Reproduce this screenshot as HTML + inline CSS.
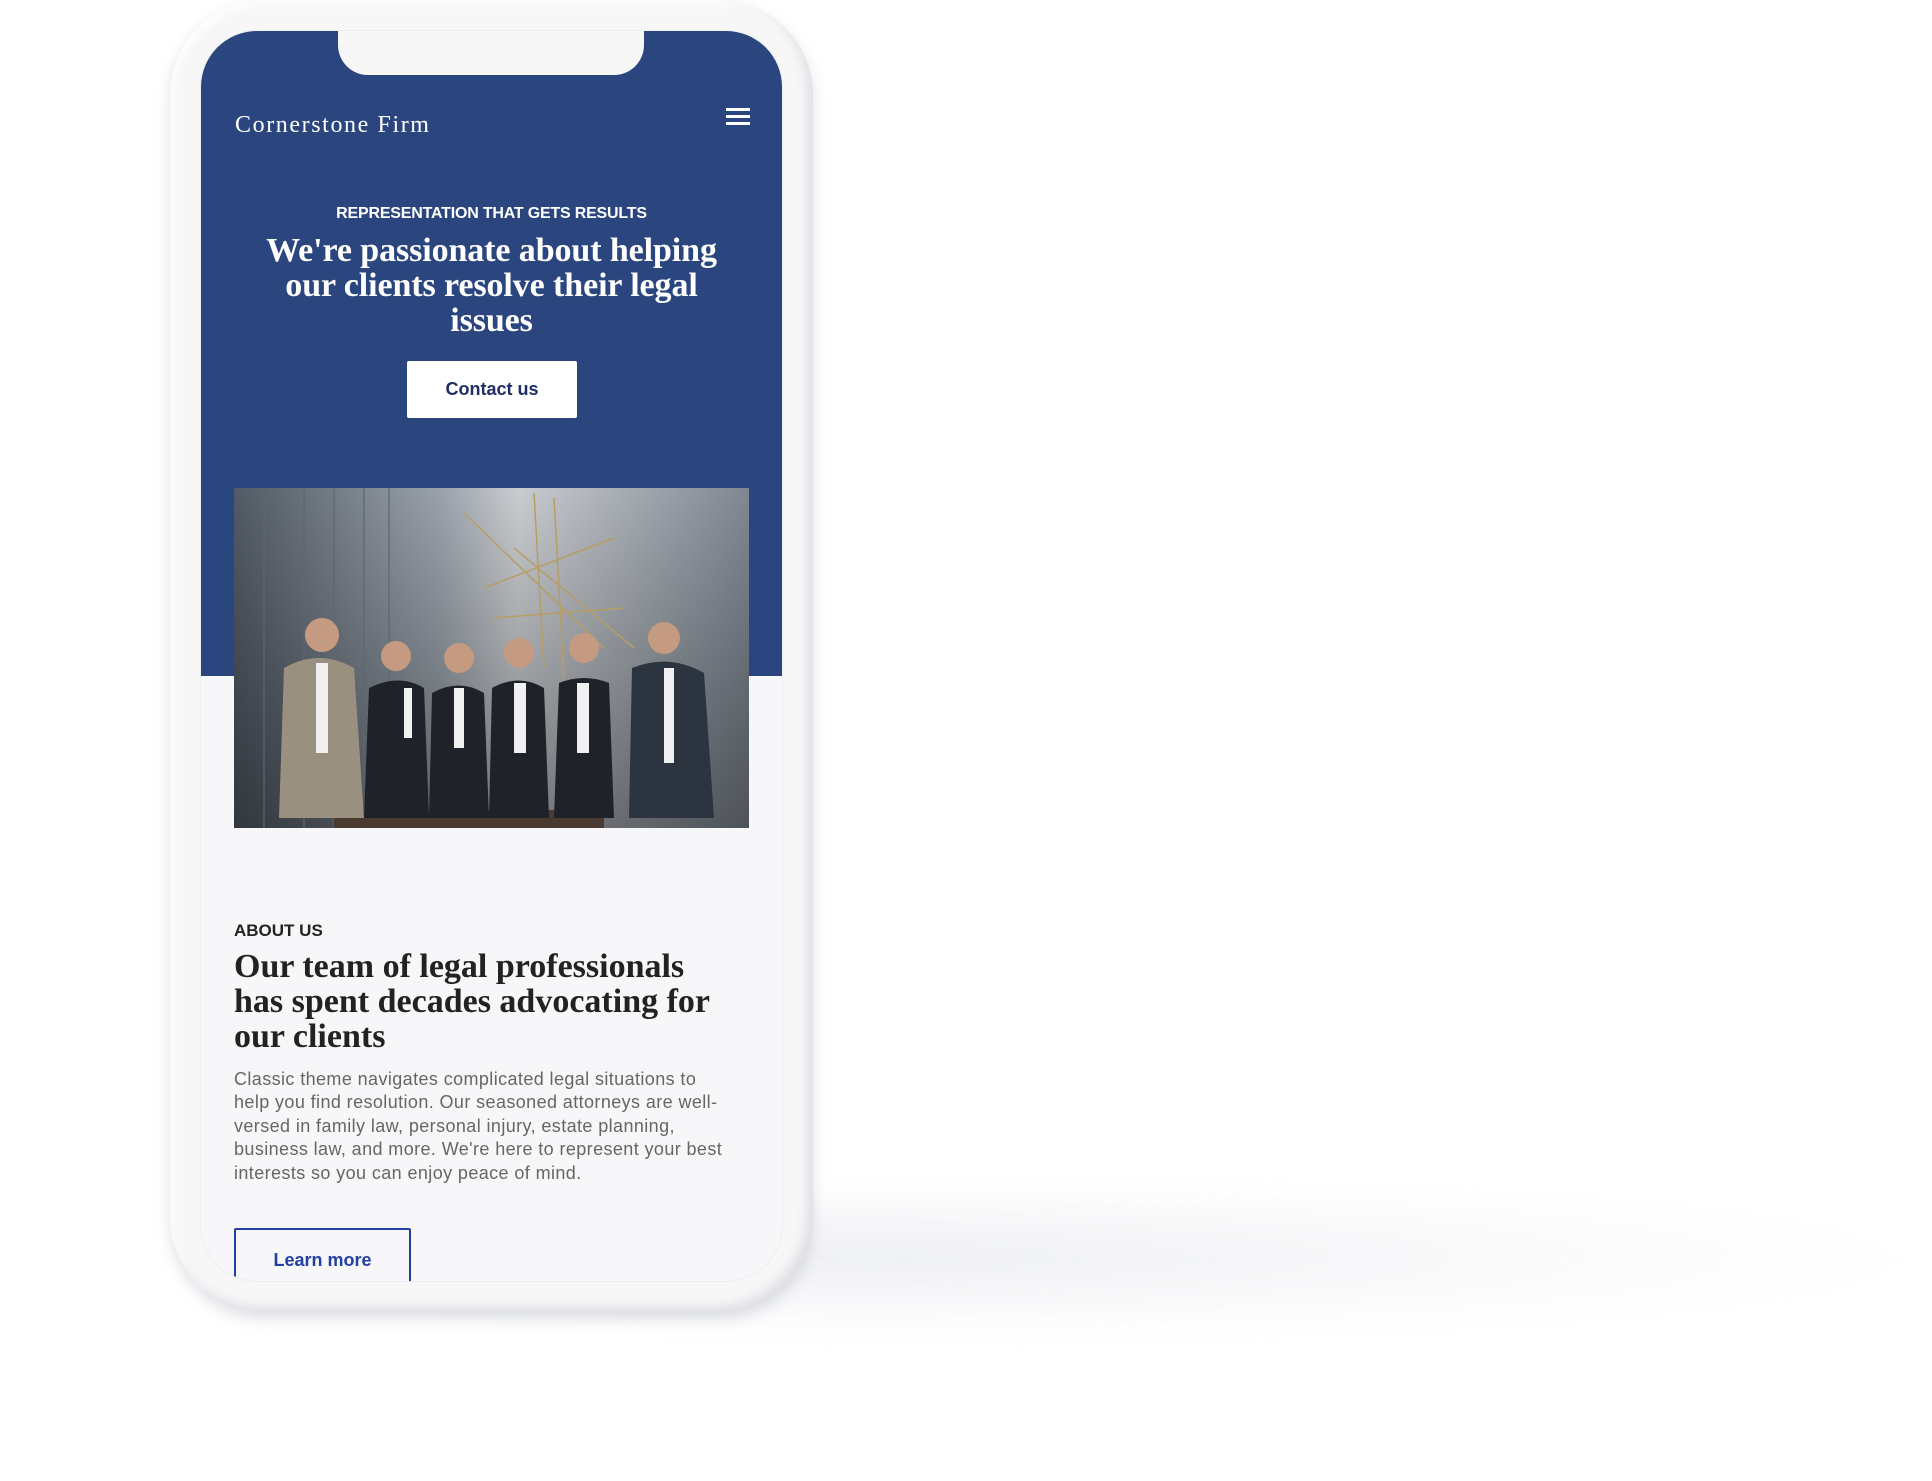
<!DOCTYPE html>
<html><head><meta charset="utf-8"><style>
html,body{margin:0;padding:0}
body{width:1932px;height:1481px;background:#fff;position:relative;overflow:hidden;font-family:"Liberation Sans",sans-serif}
.shadow{position:absolute;left:300px;top:1190px;width:1620px;height:150px;border-radius:50%;background:radial-gradient(ellipse at 35% 45%,rgba(190,195,208,.25),rgba(225,227,234,.1) 55%,rgba(255,255,255,0) 72%);filter:blur(10px)}
.phone{position:absolute;left:170px;top:0;width:643px;height:1313px;border-radius:95px;background:#f7f7f8;box-shadow:0 6px 14px rgba(150,155,170,.3),inset -6px -6px 10px rgba(200,202,210,.5),inset 4px 4px 8px rgba(255,255,255,.9)}
.screen{position:absolute;left:201px;top:31px;width:581px;height:1250px;border-radius:56px;background:#f7f7f9;overflow:hidden;box-shadow:0 0 0 1px #eceef2}
.blue{position:absolute;left:0;top:0;width:581px;height:645px;background:#2b467f}
.notch{position:absolute;left:137px;top:0;width:306px;height:44px;background:#f7f7f8;border-radius:0 0 30px 30px}
.serif{font-family:"Liberation Serif",serif}
.logo{position:absolute;left:34px;top:81px;color:#fff;font-size:24px;letter-spacing:1.6px}
.ham{position:absolute;left:525px;top:77px;width:24px}
.ham i{display:block;height:3px;background:#fff;margin-bottom:4px}
.eyebrow{position:absolute;left:0;width:581px;top:174px;text-align:center;color:#fff;font-size:16px;font-weight:bold;letter-spacing:-.2px}
.h1{position:absolute;left:0;width:581px;top:202px;text-align:center;color:#fff;font-size:34px;line-height:35px;font-weight:bold;letter-spacing:-.1px}
.btn{position:absolute;left:206px;top:330px;width:170px;height:57px;background:#fff;border-radius:2px;color:#1f2f66;font-size:18px;font-weight:bold;text-align:center;line-height:57px}
.photo{position:absolute;left:33px;top:457px;width:515px;height:340px}
.about{position:absolute;left:33px;top:890px;font-size:17px;color:#222;font-weight:bold}
.h2{position:absolute;left:33px;top:918px;width:560px;font-size:34px;line-height:35px;color:#222;font-weight:bold;letter-spacing:0;white-space:nowrap}
.p{position:absolute;left:33px;top:1037px;width:560px;font-size:18px;line-height:23.4px;color:#666;letter-spacing:.4px;white-space:nowrap}
.btn2{position:absolute;left:33px;top:1197px;width:177px;height:70px;border:2px solid #2240a0;border-radius:2px;color:#2240a0;font-size:18px;font-weight:bold;text-align:center;line-height:60px;box-sizing:border-box}
</style></head><body>
<div class="shadow"></div>
<div class="phone"></div>
<div class="screen">
<div class="blue"></div>
<div class="notch"></div>
<div class="logo serif">Cornerstone Firm</div>
<div class="ham"><i></i><i></i><i></i></div>
<div class="eyebrow">REPRESENTATION THAT GETS RESULTS</div>
<div class="h1 serif">We're passionate about helping<br>our clients resolve their legal<br>issues</div>
<div class="btn">Contact us</div>
<svg class="photo" viewBox="0 0 515 340" preserveAspectRatio="none">
<defs><linearGradient id="bg" x1="0" x2="1"><stop offset="0" stop-color="#5a6470"/><stop offset=".4" stop-color="#aab3bd"/><stop offset=".55" stop-color="#dfe3e7"/><stop offset="1" stop-color="#8d96a2"/></linearGradient>
<linearGradient id="v" y1="0" y2="1" x1="0" x2="0"><stop offset="0" stop-color="#000" stop-opacity=".1"/><stop offset="1" stop-color="#000" stop-opacity=".45"/></linearGradient></defs>
<rect width="515" height="340" fill="url(#bg)"/>
<rect width="515" height="340" fill="url(#v)"/>
<g stroke="#5e6670" stroke-width="2" opacity=".6"><line x1="30" y1="0" x2="30" y2="340"/><line x1="70" y1="0" x2="70" y2="340"/><line x1="100" y1="0" x2="100" y2="340"/><line x1="130" y1="0" x2="130" y2="300"/><line x1="155" y1="0" x2="155" y2="300"/></g>
<g stroke="#b79d64" stroke-width="1.5"><line x1="230" y1="25" x2="370" y2="160"/><line x1="300" y1="5" x2="310" y2="180"/><line x1="250" y1="100" x2="380" y2="50"/><line x1="260" y1="130" x2="390" y2="120"/><line x1="320" y1="10" x2="330" y2="190"/><line x1="280" y1="60" x2="400" y2="160"/></g>
<rect x="100" y="322" width="270" height="18" fill="#4a3a30"/>
<g fill="#1f2229">
<path d="M45 330 L50 180 Q85 160 120 180 L130 330Z" fill="#9a9080"/>
<path d="M130 330 L135 200 Q165 185 190 200 L195 330Z"/>
<path d="M195 330 L198 205 Q225 190 250 205 L255 330Z"/>
<path d="M255 330 L258 200 Q285 185 310 200 L315 330Z"/>
<path d="M320 330 L325 195 Q350 185 375 195 L380 330Z"/>
<path d="M395 330 L398 180 Q435 165 470 185 L480 330Z" fill="#2c3440"/>
</g>
<g fill="#f0f0f0"><rect x="82" y="175" width="12" height="90"/><rect x="170" y="200" width="8" height="50"/><rect x="220" y="200" width="10" height="60"/><rect x="280" y="195" width="12" height="70"/><rect x="343" y="195" width="12" height="70"/><rect x="430" y="180" width="10" height="95"/></g>
<g fill="#c49b80"><circle cx="88" cy="147" r="17"/><circle cx="162" cy="168" r="15"/><circle cx="225" cy="170" r="15"/><circle cx="285" cy="165" r="15"/><circle cx="350" cy="160" r="15"/><circle cx="430" cy="150" r="16"/></g>
</svg>
<div class="about">ABOUT US</div>
<div class="h2 serif">Our team of legal professionals<br>has spent decades advocating for<br>our clients</div>
<div class="p">Classic theme navigates complicated legal situations to<br>help you find resolution. Our seasoned attorneys are well-<br>versed in family law, personal injury, estate planning,<br>business law, and more. We're here to represent your best<br>interests so you can enjoy peace of mind.</div>
<div class="btn2">Learn more</div>
</div>
</body></html>
